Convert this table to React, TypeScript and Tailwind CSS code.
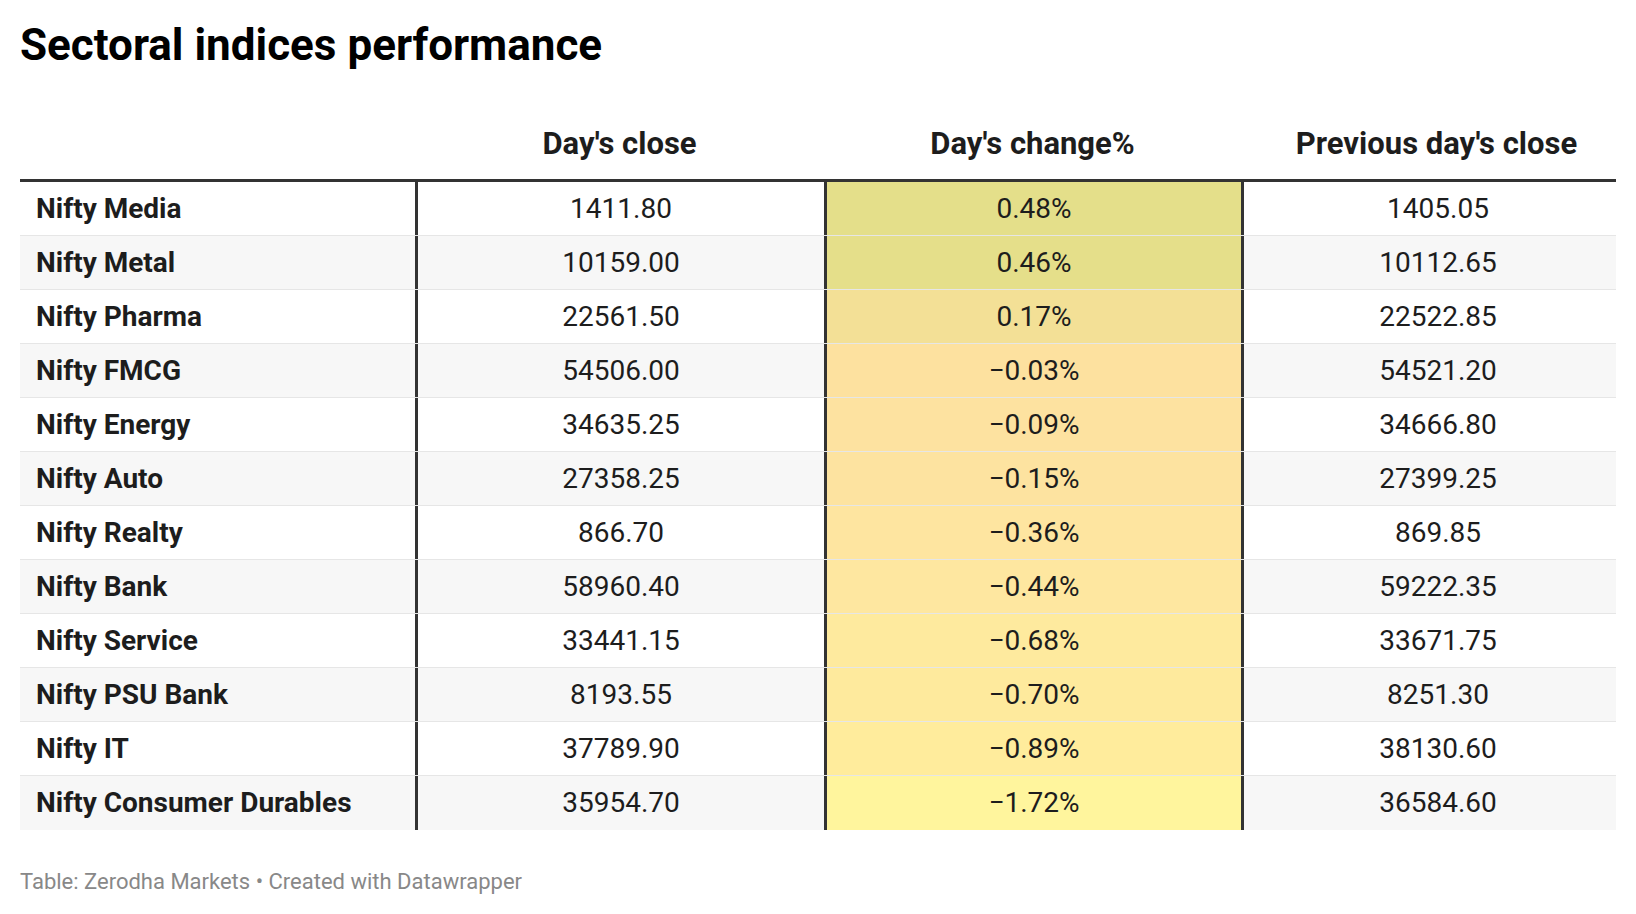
const rows = [
  { name: "Nifty Media", close: "1411.80", change: "0.48%", prev: "1405.05", color: "#e4df8a" },
  { name: "Nifty Metal", close: "10159.00", change: "0.46%", prev: "10112.65", color: "#e5df8a" },
  { name: "Nifty Pharma", close: "22561.50", change: "0.17%", prev: "22522.85", color: "#f3e096" },
  { name: "Nifty FMCG", close: "54506.00", change: "−0.03%", prev: "54521.20", color: "#fde19f" },
  { name: "Nifty Energy", close: "34635.25", change: "−0.09%", prev: "34666.80", color: "#fde2a0" },
  { name: "Nifty Auto", close: "27358.25", change: "−0.15%", prev: "27399.25", color: "#fde3a0" },
  { name: "Nifty Realty", close: "866.70", change: "−0.36%", prev: "869.85", color: "#fee5a0" },
  { name: "Nifty Bank", close: "58960.40", change: "−0.44%", prev: "59222.35", color: "#fee7a0" },
  { name: "Nifty Service", close: "33441.15", change: "−0.68%", prev: "33671.75", color: "#feea9e" },
  { name: "Nifty PSU Bank", close: "8193.55", change: "−0.70%", prev: "8251.30", color: "#feea9d" },
  { name: "Nifty IT", close: "37789.90", change: "−0.89%", prev: "38130.60", color: "#ffec9c" },
  { name: "Nifty Consumer Durables", close: "35954.70", change: "−1.72%", prev: "36584.60", color: "#fff59d" },
];

const cols = "grid grid-cols-[395px_409px_417px_375px]";

export default function App() {
  return (
    <div className="min-h-screen bg-white px-5 font-['Roboto',sans-serif] text-[#1d1d1d]">
      <h1 className="pt-[19px] text-[44px] font-bold leading-[52px] text-black">
        Sectoral indices performance
      </h1>

      <div className={`${cols} h-[111px] items-end border-b-[3px] border-[#333] pb-[17px] text-[31px] font-bold leading-[36px]`}>
        <div></div>
        <div className="text-center">Day's close</div>
        <div className="text-center">Day's change%</div>
        <div className="pl-4 text-center">Previous day's close</div>
      </div>

      <div>
        {rows.map((r, i) => (
          <div
            key={r.name}
            className={`${cols} h-[54px] text-[28px] ${i % 2 === 1 ? "bg-[#f7f7f7]" : "bg-white"} ${
              i < rows.length - 1 ? "border-b border-[#e6e6e6]" : ""
            }`}
          >
            <div className="flex items-center pl-[16px] font-bold">{r.name}</div>
            <div className="flex items-center justify-center border-l-[3px] border-[#333]">{r.close}</div>
            <div
              className="flex items-center justify-center border-l-[3px] border-[#333]"
              style={{ backgroundColor: r.color }}
            >
              {r.change}
            </div>
            <div className="flex items-center justify-center border-l-[3px] border-[#333] pl-4">{r.prev}</div>
          </div>
        ))}
      </div>

      <p className="mt-[39px] text-[22px] leading-[26px] text-[#888]">
        Table: Zerodha Markets • Created with Datawrapper
      </p>
    </div>
  );
}
